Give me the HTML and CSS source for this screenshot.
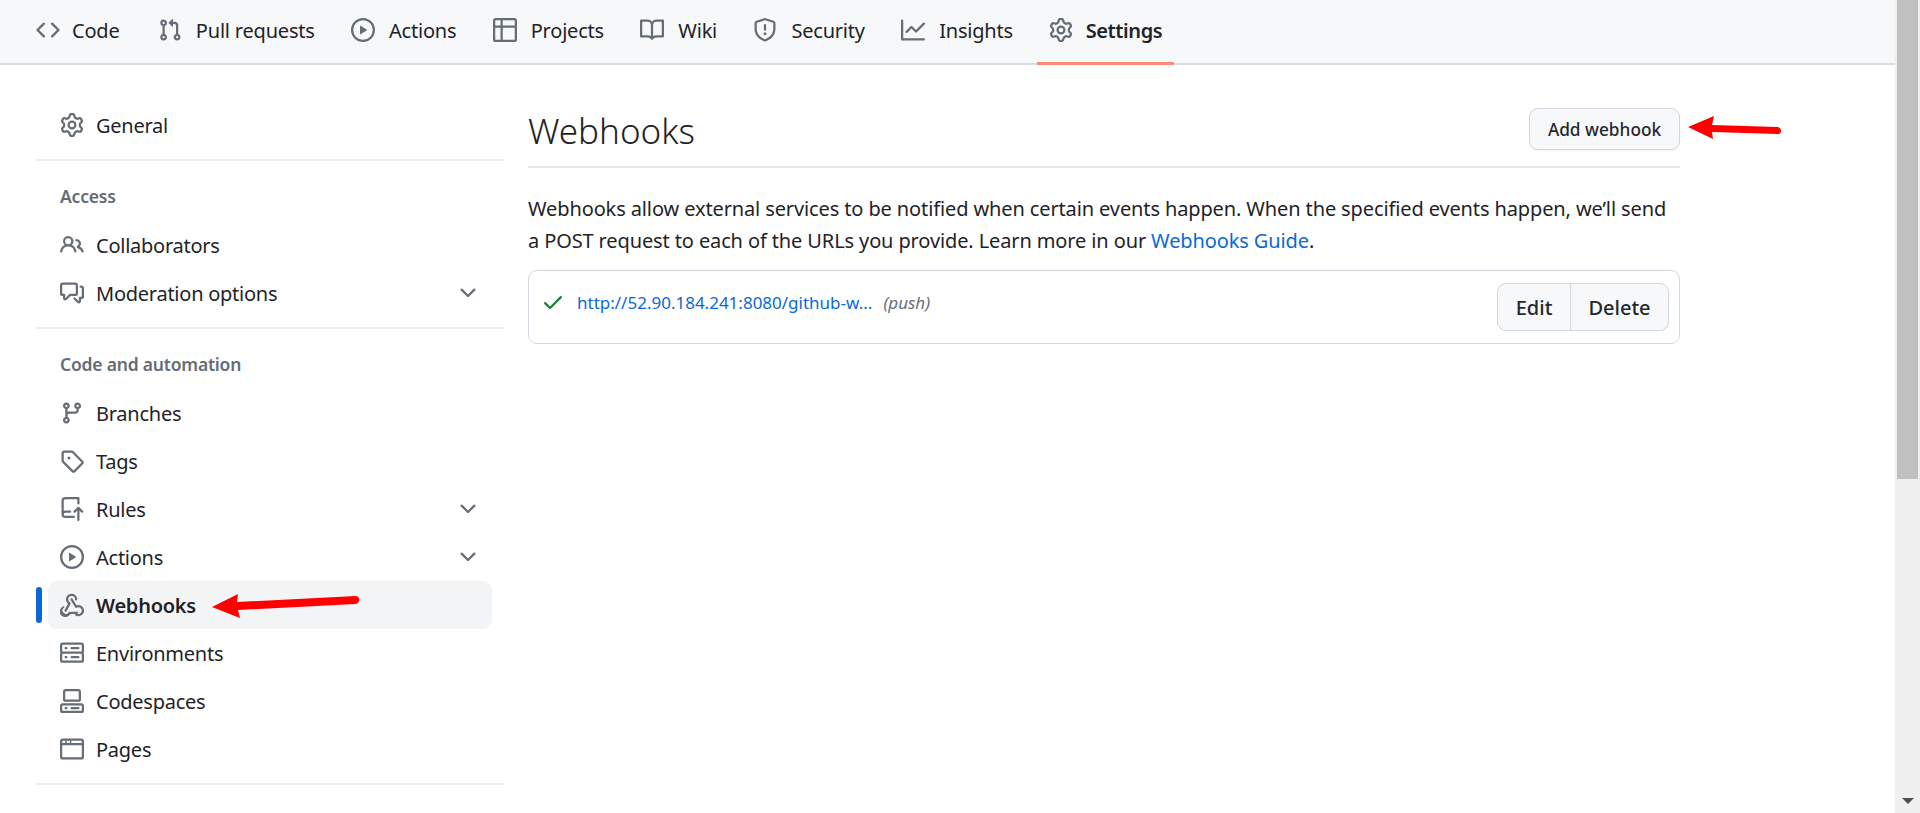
FILE: index.html
```html
<!DOCTYPE html>
<html lang="en">
<head>
  <meta charset="UTF-8">
  <title>Webhooks</title>
  <link rel="stylesheet" href="styles.css">
</head>
<body>
<svg class="defs" xmlns="http://www.w3.org/2000/svg">
  <symbol id="i-code" viewBox="0 0 16 16"><path d="M11.28 3.22l4.25 4.25a.75.75 0 010 1.06l-4.25 4.25a.749.749 0 01-1.06-1.06L13.94 8l-3.72-3.72a.749.749 0 011.06-1.06zm-6.56 0a.751.751 0 011.06 1.06L2.06 8l3.72 3.72a.749.749 0 01-1.06 1.06L.47 8.53a.75.75 0 010-1.06z"/></symbol>
  <symbol id="i-pull" viewBox="0 0 16 16"><path d="M1.5 3.25a2.25 2.25 0 113 2.122v5.256a2.251 2.251 0 11-1.5 0V5.372A2.25 2.25 0 011.5 3.25zm5.677-.177L9.573.677A.25.25 0 0110 .854V2.5h1A2.5 2.5 0 0113.5 5v5.628a2.251 2.251 0 11-1.5 0V5a1 1 0 00-1-1h-1v1.646a.25.25 0 01-.427.177L7.177 3.427a.25.25 0 010-.354zM3.75 2.5a.75.75 0 100 1.5.75.75 0 000-1.5zm0 9.5a.75.75 0 100 1.5.75.75 0 000-1.5zm8.25.75a.75.75 0 101.5 0 .75.75 0 00-1.5 0z"/></symbol>
  <symbol id="i-play" viewBox="0 0 16 16"><path d="M8 0a8 8 0 110 16A8 8 0 018 0zM1.5 8a6.5 6.5 0 1013 0 6.5 6.5 0 00-13 0zm4.879-2.773l4.264 2.559a.25.25 0 010 .428l-4.264 2.559A.25.25 0 016 10.559V5.442a.25.25 0 01.379-.215z"/></symbol>
  <symbol id="i-table" viewBox="0 0 16 16"><path d="M0 1.75C0 .784.784 0 1.75 0h12.5C15.216 0 16 .784 16 1.75v12.5A1.75 1.75 0 0114.25 16H1.75A1.75 1.75 0 010 14.25V1.75zM6.5 6.5v8h7.75a.25.25 0 00.25-.25V6.5h-8zm8-1.5V1.75a.25.25 0 00-.25-.25H6.5V5h8zM5 1.5H1.75a.25.25 0 00-.25.25V5H5V1.5zm0 5H1.5v7.75c0 .138.112.25.25.25H5v-8z"/></symbol>
  <symbol id="i-book" viewBox="0 0 16 16"><path d="M0 1.75A.75.75 0 01.75 1h4.253c1.227 0 2.317.59 3 1.501A3.744 3.744 0 0111.006 1h4.245a.75.75 0 01.75.75v10.5a.75.75 0 01-.75.75h-4.507a2.25 2.25 0 00-1.591.659l-.622.621a.75.75 0 01-1.06 0l-.622-.621A2.25 2.25 0 005.258 13H.75a.75.75 0 01-.75-.75V1.75zm7.251 10.324l.004-5.073-.002-2.253A2.25 2.25 0 005.003 2.5H1.5v9h3.757a3.75 3.75 0 011.994.574zM8.755 4.75l-.004 7.322a3.752 3.752 0 011.992-.572H14.5v-9h-3.495a2.25 2.25 0 00-2.25 2.25z"/></symbol>
  <symbol id="i-shield" viewBox="0 0 16 16"><path d="M7.467.133a1.748 1.748 0 011.066 0l5.25 1.68A1.75 1.75 0 0115 3.48V7c0 1.566-.32 3.182-1.303 4.682-.983 1.498-2.585 2.813-5.032 3.855a1.697 1.697 0 01-1.33 0c-2.447-1.042-4.049-2.357-5.032-3.855C1.32 10.182 1 8.566 1 7V3.48a1.75 1.75 0 011.217-1.667l5.25-1.68zm.61 1.429a.25.25 0 00-.153 0l-5.25 1.68a.25.25 0 00-.174.238V7c0 1.358.275 2.666 1.057 3.86.784 1.194 2.121 2.34 4.366 3.297a.196.196 0 00.154 0c2.245-.956 3.582-2.104 4.366-3.298C13.225 9.666 13.5 8.36 13.5 7V3.48a.25.25 0 00-.174-.237l-5.25-1.68zM8.75 4.75v3a.75.75 0 01-1.5 0v-3a.75.75 0 011.5 0zM9 10.5a1 1 0 11-2 0 1 1 0 012 0z"/></symbol>
  <symbol id="i-graph" viewBox="0 0 16 16"><path d="M1.5 1.75V13.5h13.75a.75.75 0 010 1.5H.75a.75.75 0 01-.75-.75V1.75a.75.75 0 011.5 0zm14.28 2.53l-5.25 5.25a.75.75 0 01-1.06 0L7 7.06 4.28 9.78a.751.751 0 01-1.042-.018.751.751 0 01-.018-1.042l3.25-3.25a.75.75 0 011.06 0L10 7.94l4.72-4.72a.751.751 0 011.042.018.751.751 0 01.018 1.042z"/></symbol>
  <symbol id="i-gear" viewBox="0 0 16 16"><path d="M8 0a8.2 8.2 0 01.701.031C9.444.095 9.99.645 10.16 1.29l.288 1.107c.018.066.079.158.212.224.231.114.454.243.668.386.123.082.233.09.299.071l1.103-.303c.644-.176 1.392.021 1.82.63.27.385.506.792.704 1.218.315.675.111 1.422-.364 1.891l-.814.806c-.049.048-.098.147-.088.294.016.257.016.515 0 .772-.01.147.038.246.088.294l.814.806c.475.469.679 1.216.364 1.891a7.977 7.977 0 01-.704 1.217c-.428.61-1.176.807-1.82.63l-1.102-.302c-.067-.019-.177-.011-.3.071a5.909 5.909 0 01-.668.386c-.133.066-.194.158-.211.224l-.29 1.106c-.168.646-.715 1.196-1.458 1.26a8.006 8.006 0 01-1.402 0c-.743-.064-1.289-.614-1.458-1.26l-.289-1.106c-.018-.066-.079-.158-.212-.224a5.738 5.738 0 01-.668-.386c-.123-.082-.233-.09-.299-.071l-1.103.303c-.644.176-1.392-.021-1.82-.63a8.12 8.12 0 01-.704-1.218c-.315-.675-.111-1.422.363-1.891l.815-.806c.05-.048.098-.147.088-.294a6.214 6.214 0 010-.772c.01-.147-.038-.246-.088-.294l-.815-.806C.635 6.045.431 5.298.746 4.623a7.92 7.92 0 01.704-1.217c.428-.61 1.176-.807 1.82-.63l1.102.302c.067.019.177.011.3-.071.214-.143.437-.272.668-.386.133-.066.194-.158.211-.224l.29-1.106C6.009.645 6.556.095 7.299.03 7.53.01 7.764 0 8 0zm-.571 1.525c-.036.003-.108.036-.137.146l-.289 1.105c-.147.561-.549.967-.998 1.189-.173.086-.34.183-.5.29-.417.278-.97.423-1.529.27l-1.103-.303c-.109-.03-.175.016-.195.045-.22.312-.412.644-.573.99-.014.031-.021.11.059.19l.815.806c.411.406.562.957.53 1.456a4.709 4.709 0 000 .582c.032.499-.119 1.05-.53 1.456l-.815.806c-.081.08-.073.159-.059.19.162.346.353.677.573.989.02.03.085.076.195.046l1.102-.303c.56-.153 1.113-.008 1.53.27.161.107.328.204.501.29.447.222.85.629.997 1.189l.289 1.105c.029.109.101.143.137.146a6.6 6.6 0 001.142 0c.036-.003.108-.036.137-.146l.289-1.105c.147-.561.549-.967.998-1.189.173-.086.34-.183.5-.29.417-.278.97-.423 1.529-.27l1.103.303c.109.029.175-.016.195-.045.22-.313.411-.644.573-.99.014-.031.021-.11-.059-.19l-.815-.806c-.411-.406-.562-.957-.53-1.456a4.709 4.709 0 000-.582c-.032-.499.119-1.05.53-1.456l.815-.806c.081-.08.073-.159.059-.19a6.464 6.464 0 00-.573-.989c-.02-.03-.085-.076-.195-.046l-1.102.303c-.56.153-1.113.008-1.53-.27a4.44 4.44 0 00-.501-.29c-.447-.222-.85-.629-.997-1.189l-.289-1.105c-.029-.11-.101-.143-.137-.146a6.6 6.6 0 00-1.142 0zM11 8a3 3 0 11-6 0 3 3 0 016 0zM9.5 8a1.5 1.5 0 10-3.001.001A1.5 1.5 0 009.5 8z"/></symbol>
  <symbol id="i-people" viewBox="0 0 16 16"><path d="M2 5.5a3.5 3.5 0 115.898 2.549 5.508 5.508 0 013.034 4.084.75.75 0 11-1.482.235 4 4 0 00-7.9 0 .75.75 0 01-1.482-.236A5.507 5.507 0 013.102 8.05 3.493 3.493 0 012 5.5zM11 4a3.001 3.001 0 012.22 5.018 5.01 5.01 0 012.56 3.012.749.749 0 01-.885.954.752.752 0 01-.549-.514 3.507 3.507 0 00-2.522-2.372.75.75 0 01-.574-.73v-.352a.75.75 0 01.416-.672A1.5 1.5 0 0011 5.5.75.75 0 0111 4zm-5.5-.5a2 2 0 10-.001 3.999A2 2 0 005.5 3.5z"/></symbol>
  <symbol id="i-comment" viewBox="0 0 16 16"><path d="M1.75 1h8.5c.966 0 1.75.784 1.75 1.75v5.5A1.75 1.75 0 0110.25 10H7.061l-2.574 2.573A1.458 1.458 0 012 11.543V10h-.25A1.75 1.75 0 010 8.25v-5.5C0 1.784.784 1 1.75 1zM1.5 2.75v5.5c0 .138.112.25.25.25h1a.75.75 0 01.75.75v2.19l2.72-2.72a.749.749 0 01.53-.22h3.5a.25.25 0 00.25-.25v-5.5a.25.25 0 00-.25-.25h-8.5a.25.25 0 00-.25.25zm13 2a.25.25 0 00-.25-.25h-.5a.75.75 0 010-1.5h.5c.966 0 1.75.784 1.75 1.75v5.5A1.75 1.75 0 0114.25 12H14v1.543a1.458 1.458 0 01-2.487 1.03L9.22 12.28a.749.749 0 01.326-1.275.749.749 0 01.734.215l2.22 2.22v-2.19a.75.75 0 01.75-.75h1a.25.25 0 00.25-.25z"/></symbol>
  <symbol id="i-branch" viewBox="0 0 16 16"><path d="M9.5 3.25a2.25 2.25 0 113 2.122V6A2.5 2.5 0 0110 8.5H6a1 1 0 00-1 1v1.128a2.251 2.251 0 11-1.5 0V5.372a2.25 2.25 0 111.5 0v1.836A2.493 2.493 0 016 7h4a1 1 0 001-1v-.628A2.25 2.25 0 019.5 3.25zm-6 0a.75.75 0 101.5 0 .75.75 0 00-1.5 0zm8.25-.75a.75.75 0 100 1.5.75.75 0 000-1.5zM4.25 12a.75.75 0 100 1.5.75.75 0 000-1.5z"/></symbol>
  <symbol id="i-tag" viewBox="0 0 16 16"><path d="M1 7.775V2.75C1 1.784 1.784 1 2.75 1h5.025c.464 0 .91.184 1.238.513l6.25 6.25a1.75 1.75 0 010 2.474l-5.026 5.026a1.75 1.75 0 01-2.474 0l-6.25-6.25A1.75 1.75 0 011 7.775zm1.5 0c0 .066.026.13.073.177l6.25 6.25a.25.25 0 00.354 0l5.025-5.025a.25.25 0 000-.354l-6.25-6.25a.25.25 0 00-.177-.073H2.75a.25.25 0 00-.25.25zM6 5a1 1 0 110 2 1 1 0 010-2z"/></symbol>
  <symbol id="i-push" viewBox="0 0 16 16"><path d="M1 2.5A2.5 2.5 0 013.5 0h8.75a.75.75 0 01.75.75v3.5a.75.75 0 01-1.5 0V1.5h-8a1 1 0 00-1 1v6.708A2.492 2.492 0 013.5 9h3.25a.75.75 0 010 1.5H3.5a1 1 0 100 2h5.75a.75.75 0 010 1.5H3.5A2.5 2.5 0 011 11.5v-9zm13.23 7.79a.75.75 0 001.06-1.06l-2.505-2.505a.75.75 0 00-1.06 0L9.22 9.229a.75.75 0 001.06 1.061l1.225-1.224v6.184a.75.75 0 001.5 0V9.066l1.224 1.224z"/></symbol>
  <symbol id="i-webhook" viewBox="0 0 16 16"><path d="M5.5 4.25a2.25 2.25 0 014.5 0 .75.75 0 001.5 0 3.75 3.75 0 10-6.14 2.889l-2.272 4.258a.75.75 0 001.324.706L7 7.25a.75.75 0 00-.309-1.015A2.25 2.25 0 015.5 4.25z"/><path d="M7.364 3.607a.75.75 0 011.03.257l2.608 4.349a3.75 3.75 0 11-.628 6.785.75.75 0 01.752-1.299 2.25 2.25 0 10-.033-3.88.75.75 0 01-1.03-.256L7.107 4.636a.75.75 0 01.257-1.03z"/><path d="M2.9 8.776A.75.75 0 012.625 9.8 2.25 2.25 0 105.5 13.25a.75.75 0 01.75-.75h5a.75.75 0 010 1.5H6.922a3.751 3.751 0 11-5.047-5.05.75.75 0 011.025.276z"/></symbol>
  <symbol id="i-server" viewBox="0 0 16 16"><path d="M1.75 1h12.5c.966 0 1.75.784 1.75 1.75v4c0 .372-.116.717-.314 1 .198.283.314.628.314 1v4a1.75 1.75 0 01-1.75 1.75H1.75A1.75 1.75 0 010 12.75v-4c0-.358.109-.707.314-1a1.739 1.739 0 01-.314-1v-4C0 1.784.784 1 1.75 1zM1.5 2.75v4c0 .138.112.25.25.25h12.5a.25.25 0 00.25-.25v-4a.25.25 0 00-.25-.25H1.75a.25.25 0 00-.25.25zm.25 5.75a.25.25 0 00-.25.25v4c0 .138.112.25.25.25h12.5a.25.25 0 00.25-.25v-4a.25.25 0 00-.25-.25zM7 4.75A.75.75 0 017.75 4h4.5a.75.75 0 010 1.5h-4.5A.75.75 0 017 4.75zM7.75 10h4.5a.75.75 0 010 1.5h-4.5a.75.75 0 010-1.5zM3 4.75A.75.75 0 013.75 4h.5a.75.75 0 010 1.5h-.5A.75.75 0 013 4.75zM3.75 10h.5a.75.75 0 010 1.5h-.5a.75.75 0 010-1.5z"/></symbol>
  <symbol id="i-codespaces" viewBox="0 0 16 16"><path d="M0 11.25c0-.966.784-1.75 1.75-1.75h12.5c.966 0 1.75.784 1.75 1.75v3A1.75 1.75 0 0114.25 16H1.75A1.75 1.75 0 010 14.25zm2-9.5C2 .784 2.784 0 3.75 0h8.5C13.216 0 14 .784 14 1.75v5a1.75 1.75 0 01-1.75 1.75h-8.5A1.75 1.75 0 012 6.75zm1.75-.25a.25.25 0 00-.25.25v5c0 .138.112.25.25.25h8.5a.25.25 0 00.25-.25v-5a.25.25 0 00-.25-.25zm-2 9.5a.25.25 0 00-.25.25v3c0 .138.112.25.25.25h12.5a.25.25 0 00.25-.25v-3a.25.25 0 00-.25-.25z"/><path d="M7 12.75a.75.75 0 01.75-.75h4.5a.75.75 0 010 1.5h-4.5a.75.75 0 01-.75-.75zm-4 0a.75.75 0 01.75-.75h.5a.75.75 0 010 1.5h-.5a.75.75 0 01-.75-.75z"/></symbol>
  <symbol id="i-browser" viewBox="0 0 16 16"><path d="M0 2.75C0 1.784.784 1 1.75 1h12.5c.966 0 1.75.784 1.75 1.75v10.5A1.75 1.75 0 0114.25 15H1.75A1.75 1.75 0 010 13.25zm14.5 2.75H1.5v7.75c0 .138.112.25.25.25h12.5a.25.25 0 00.25-.25V5.5zM1.75 2.5a.25.25 0 00-.25.25V4h2V2.5zM4.5 2.5V4h2V2.5zM7.5 2.5V4h7V2.75a.25.25 0 00-.25-.25z"/></symbol>
  <symbol id="i-check" viewBox="0 0 16 16"><path d="M13.78 4.22a.75.75 0 010 1.06l-7.25 7.25a.75.75 0 01-1.06 0L2.22 9.28a.751.751 0 01.018-1.042.751.751 0 011.042-.018L6 10.94l6.72-6.72a.75.75 0 011.06 0z"/></symbol>
  <symbol id="i-chevron" viewBox="0 0 16 16"><path d="M12.78 5.22a.749.749 0 010 1.06l-4.25 4.25a.749.749 0 01-1.06 0L3.22 6.28a.749.749 0 111.06-1.06L8 8.939l3.72-3.719a.749.749 0 011.06 0z"/></symbol>
</svg>

<div class="page">
  <!--顶部导航-->
  <nav class="repo-nav">
    <a class="tab"><svg class="icon"><use href="#i-code"/></svg>Code</a>
    <a class="tab"><svg class="icon"><use href="#i-pull"/></svg>Pull requests</a>
    <a class="tab"><svg class="icon"><use href="#i-play"/></svg>Actions</a>
    <a class="tab"><svg class="icon"><use href="#i-table"/></svg>Projects</a>
    <a class="tab"><svg class="icon"><use href="#i-book"/></svg>Wiki</a>
    <a class="tab"><svg class="icon"><use href="#i-shield"/></svg>Security</a>
    <a class="tab"><svg class="icon"><use href="#i-graph"/></svg>Insights</a>
    <a class="tab current"><svg class="icon"><use href="#i-gear"/></svg>Settings</a>
  </nav>

  <div class="content">
    <!--左侧菜单-->
    <aside class="sidebar">
      <a class="item"><svg class="icon"><use href="#i-gear"/></svg>General</a>
      <hr class="rule">
      <h3 class="group">Access</h3>
      <a class="item"><svg class="icon"><use href="#i-people"/></svg>Collaborators</a>
      <a class="item"><svg class="icon"><use href="#i-comment"/></svg>Moderation options<svg class="icon chevron"><use href="#i-chevron"/></svg></a>
      <hr class="rule">
      <h3 class="group">Code and automation</h3>
      <a class="item"><svg class="icon"><use href="#i-branch"/></svg>Branches</a>
      <a class="item"><svg class="icon"><use href="#i-tag"/></svg>Tags</a>
      <a class="item"><svg class="icon"><use href="#i-push"/></svg>Rules<svg class="icon chevron"><use href="#i-chevron"/></svg></a>
      <a class="item"><svg class="icon"><use href="#i-play"/></svg>Actions<svg class="icon chevron"><use href="#i-chevron"/></svg></a>
      <a class="item current"><svg class="icon"><use href="#i-webhook"/></svg>Webhooks</a>
      <a class="item"><svg class="icon"><use href="#i-server"/></svg>Environments</a>
      <a class="item"><svg class="icon"><use href="#i-codespaces"/></svg>Codespaces</a>
      <a class="item"><svg class="icon"><use href="#i-browser"/></svg>Pages</a>
      <hr class="rule">
    </aside>

    <!--右侧内容-->
    <main class="main">
      <div class="subhead">
        <h2>Webhooks</h2>
        <a class="btn btn-add">Add webhook</a>
      </div>
      <p class="intro">Webhooks allow external services to be notified when certain events happen. When the specified events happen, we’ll send a POST request to each of the URLs you provide. Learn more in our <a class="link">Webhooks Guide</a>.</p>
      <div class="hook">
        <div class="hook-info">
          <svg class="icon check"><use href="#i-check"/></svg>
          <a class="link hook-url">http://52.90.184.241:8080/github-w...</a>
          <em class="hook-event">(push)</em>
        </div>
        <div class="btn-group">
          <a class="btn">Edit</a>
          <a class="btn">Delete</a>
        </div>
      </div>
    </main>
  </div>

  <!--红色箭头标注-->
  <svg class="arrow arrow-sidebar" viewBox="0 0 150 26"><path d="M1 14 L27 1 L26 9 L145 3 Q149 4 148 8 Q147 11 144 11 L27 17 L29 25 Z"/></svg>
  <svg class="arrow arrow-add" viewBox="0 0 95 24"><path d="M1 11 L27 0 L25 9 L91 11 Q94 12 94 15 Q94 18 91 18 L25 16 L26 23 Z"/></svg>
</div>

<div class="scrollbar">
  <div class="thumb"></div>
  <div class="down"></div>
</div>
</body>
</html>
```

FILE: styles.css
```css
* {
  box-sizing: border-box;
}

body {
  margin: 0;
  height: 813px;
  overflow: hidden;
  display: flex;
  font-family: "Noto Sans", "Liberation Sans", sans-serif;
  font-size: 20px;
  color: #1f2328;
  background: #fff;
}

.defs {
  display: none;
}

.page {
  flex: 1;
  position: relative;
}

.icon {
  width: 24px;
  height: 24px;
  flex: none;
  fill: #656d76;
}

/* top nav */
.repo-nav {
  height: 65px;
  display: flex;
  gap: 12.3px;
  padding-left: 24px;
  background: #f6f8fa;
  border-bottom: 2px solid #d8dee4;
}

.tab {
  display: flex;
  align-items: center;
  gap: 14px;
  height: 65px;
  padding: 0 12px 2px;
  border-bottom: 3px solid transparent;
  letter-spacing: -0.2px;
}

.tab:first-child {
  gap: 12px;
  padding-right: 14px;
}

.tab.current {
  gap: 12.5px;
  font-weight: 600;
  letter-spacing: -0.4px;
  border-bottom-color: #fd8c73;
}

/* sidebar */
.content {
  display: flex;
  padding: 36px 0 0 36px;
}

.sidebar {
  width: 468px;
  flex: none;
}

.item {
  position: relative;
  display: flex;
  align-items: center;
  gap: 12px;
  height: 48px;
  margin: 0 12px;
  padding: 0 12px;
  border-radius: 9px;
  letter-spacing: -0.25px;
}

.item.current {
  font-weight: 600;
  background: #f3f4f6;
}

.item.current::before {
  content: "";
  position: absolute;
  left: -12px;
  top: 6px;
  width: 6px;
  height: 36px;
  border-radius: 3px;
  background: #0969da;
}

.chevron {
  margin-left: auto;
}

.rule {
  height: 2px;
  margin: 10px 0;
  border: 0;
  background: #ebedf0;
}

.rule + .group {
  margin-top: -10px;
}

.group {
  margin: 0;
  padding: 22px 24px 11px;
  font-size: 17.5px;
  line-height: 27px;
  font-weight: 600;
  letter-spacing: -0.2px;
  color: #656d76;
}

/* main */
.main {
  width: 1152px;
  margin-left: 24px;
}

.subhead {
  display: flex;
  justify-content: space-between;
  height: 67px;
  border-bottom: 2px solid #e4e6e9;
}

.subhead h2 {
  margin: 0;
  font-size: 35px;
  line-height: 60px;
  font-weight: 300;
}

.btn {
  display: flex;
  align-items: center;
  justify-content: center;
  font-weight: 500;
  color: #24292f;
  background: #f6f8fa;
  border: 1.5px solid #d0d7de;
}

.btn-add {
  width: 151px;
  height: 42px;
  margin-top: 7px;
  font-size: 17.25px;
  border-radius: 9px;
  box-shadow: 0 1px 1px rgba(31, 35, 40, 0.06);
}

.intro {
  margin: 25px 0 13px;
  padding-right: 10px;
  line-height: 32px;
  letter-spacing: -0.12px;
}

.link {
  color: #0969da;
}

.hook {
  display: flex;
  align-items: center;
  justify-content: space-between;
  height: 74px;
  padding: 0 10px 0 12px;
  border: 1.5px solid #d0d7de;
  border-radius: 9px;
}

.hook-info {
  display: flex;
  align-items: center;
  margin-bottom: 10px;
  font-size: 17px;
}

.check {
  fill: #1a7f37;
}

.hook-url {
  margin-left: 12px;
}

.hook-event {
  margin-left: 11px;
  color: #656d76;
}

.btn-group {
  display: flex;
  height: 48px;
}

.btn-group .btn:first-child {
  width: 75px;
  border-radius: 9px 0 0 9px;
}

.btn-group .btn:last-child {
  width: 99px;
  margin-left: -1.5px;
  border-radius: 0 9px 9px 0;
}

/* annotations */
.arrow {
  position: absolute;
  fill: #fe0000;
}

.arrow-sidebar {
  left: 211px;
  top: 593px;
  width: 150px;
  height: 26px;
}

.arrow-add {
  left: 1687px;
  top: 116px;
  width: 95px;
  height: 24px;
}

/* scrollbar */
.scrollbar {
  position: relative;
  width: 25px;
  flex: none;
  padding-left: 2px;
  background: #f0f0f0;
}

.thumb {
  width: 21px;
  height: 479px;
  background: #c0c0c0;
}

.down {
  position: absolute;
  left: 7px;
  bottom: 9px;
  border-style: solid;
  border-width: 6px 6px 0;
  border-color: #505050 transparent transparent;
}
```
